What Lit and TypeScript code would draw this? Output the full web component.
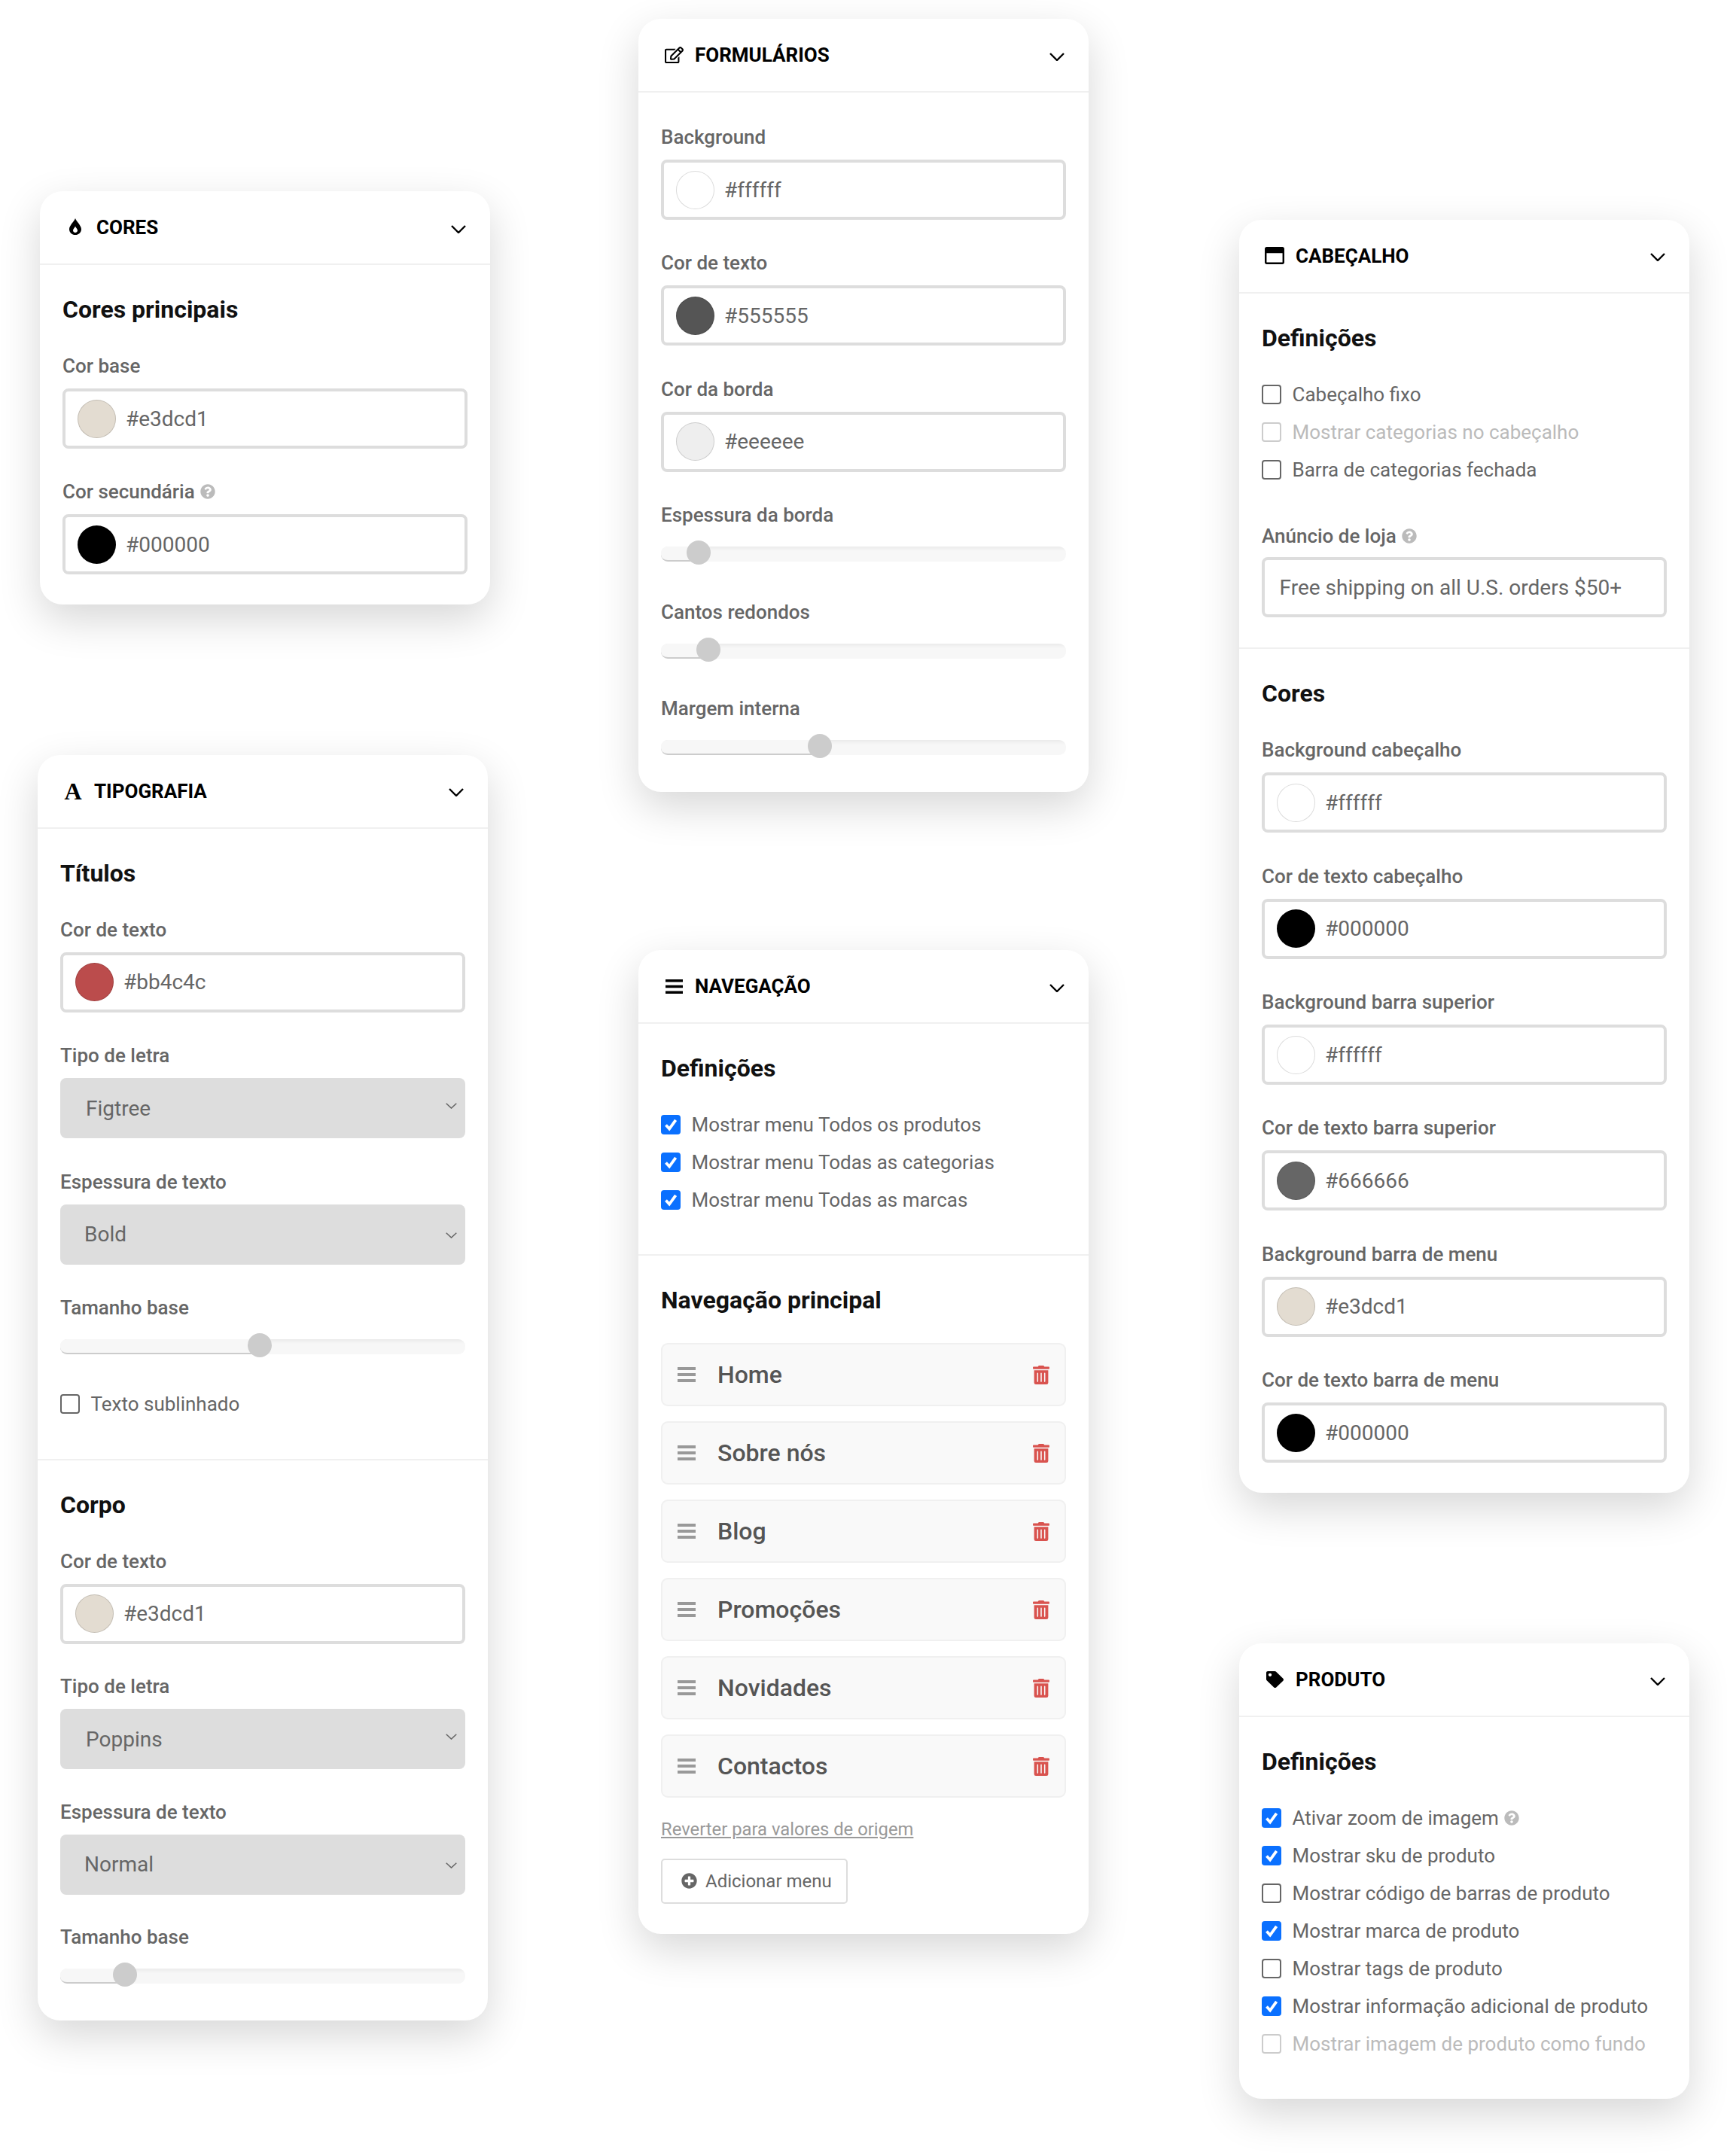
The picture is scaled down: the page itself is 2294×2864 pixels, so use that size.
import { LitElement, html, css } from "lit";
import { customElement } from "lit/decorators.js";

const chevron = html`<svg class="chev" viewBox="0 0 20 11"><path d="M1 1l9 9 9-9" fill="none" stroke="#000" stroke-width="2.4"/></svg>`;
const help = html`<svg class="help" viewBox="0 0 512 512"><path fill="#bbb" d="M504 256c0 136.997-111.043 248-248 248S8 392.997 8 256C8 119.083 119.043 8 256 8s248 111.083 248 248zM262.655 90c-54.497 0-89.255 22.957-116.549 63.758-3.536 5.286-2.353 12.415 2.715 16.258l34.699 26.31c5.205 3.947 12.621 3.008 16.665-2.122 17.864-22.658 30.113-35.797 57.303-35.797 20.429 0 45.698 13.148 45.698 32.958 0 14.976-12.363 22.667-32.534 33.976C247.128 238.528 216 254.941 216 296v4c0 6.627 5.373 12 12 12h56c6.627 0 12-5.373 12-12v-1.333c0-28.462 83.186-29.647 83.186-106.667 0-58.002-60.165-102-116.531-102zM256 338c-25.365 0-46 20.635-46 46 0 25.364 20.635 46 46 46s46-20.636 46-46c0-25.365-20.635-46-46-46z"/></svg>`;
const trash = html`<svg class="trash" viewBox="0 0 448 512"><path fill="#d9534f" d="M32 464a48 48 0 0 0 48 48h288a48 48 0 0 0 48-48V128H32zm272-256a16 16 0 0 1 32 0v224a16 16 0 0 1-32 0zm-96 0a16 16 0 0 1 32 0v224a16 16 0 0 1-32 0zm-96 0a16 16 0 0 1 32 0v224a16 16 0 0 1-32 0zM432 32H312l-9.4-18.7A24 24 0 0 0 281.1 0H166.8a23.72 23.72 0 0 0-21.4 13.3L136 32H16A16 16 0 0 0 0 48v32a16 16 0 0 0 16 16h416a16 16 0 0 0 16-16V48a16 16 0 0 0-16-16z"/></svg>`;
const plus = html`<svg class="plus" viewBox="0 0 512 512"><path fill="#666" d="M256 8C119 8 8 119 8 256s111 248 248 248 248-111 248-248S393 8 256 8zm144 276c0 6.6-5.4 12-12 12h-92v92c0 6.6-5.4 12-12 12h-56c-6.6 0-12-5.4-12-12v-92h-92c-6.6 0-12-5.4-12-12v-56c0-6.6 5.4-12 12-12h92v-92c0-6.6 5.4-12 12-12h56c6.6 0 12 5.4 12 12v92h92c6.6 0 12 5.4 12 12v56z"/></svg>`;
const handle = html`<svg class="handle" viewBox="0 0 24 20"><path fill="#999" d="M0 0h24v4H0zM0 8h24v4H0zM0 16h24v4H0z"/></svg>`;
const tick = html`<svg class="tick" viewBox="0 0 26 26"><path d="M6.5 13.5l4.6 5L19.6 6.8" fill="none" stroke="#fff" stroke-width="3.8"/></svg>`;

const icons = {
  drop: html`<svg class="ic up" style="width:16px;height:22px" viewBox="0 0 16 22"><path fill-rule="evenodd" d="M8 0C6.8 4 0 9.5 0 14.4 0 18.8 3.6 22 8 22s8-3.2 8-7.6C16 9.5 9.2 4 8 0zM8 10.5c.6 1.8 3 3.8 3 5.6 0 1.7-1.3 2.9-3 2.9s-3-1.2-3-2.9c0-1.8 2.4-3.8 3-5.6z"/></svg>`,
  font: html`<span class="ic-a">A</span>`,
  edit: html`<svg class="ic" style="width:25px;height:22px" viewBox="0 0 576 512" preserveAspectRatio="none"><path d="M402.3 344.9l32-32c5-5 13.7-1.5 13.7 5.7V464c0 26.5-21.5 48-48 48H48c-26.5 0-48-21.5-48-48V112c0-26.5 21.5-48 48-48h273.5c7.1 0 10.7 8.6 5.7 13.7l-32 32c-1.5 1.5-3.5 2.3-5.7 2.3H48v352h352V350.5c0-2.1.8-4.1 2.3-5.6zm156.6-201.8L296.3 405.7l-90.4 10c-26.2 2.9-48.5-19.2-45.6-45.6l10-90.4L432.9 17.1c22.9-22.9 59.9-22.9 82.7 0l43.2 43.2c22.9 22.9 22.9 60 .1 82.8zM460.1 174L402 115.9 216.2 301.8l-7.3 65.3 65.3-7.3L460.1 174zm64.8-79.7l-43.2-43.2c-4.1-4.1-10.8-4.1-14.8 0L436 82l58.1 58.1 30.9-30.9c4-4.2 4-10.8-.1-14.9z"/></svg>`,
  bars: html`<svg class="ic" style="width:23px;height:19px" viewBox="0 0 23 19"><path d="M0 0h23v3.6H0zM0 7.7h23v3.6H0zM0 15.4h23V19H0z"/></svg>`,
  win: html`<svg class="ic" style="width:26px;height:23px" viewBox="0 32 512 448" preserveAspectRatio="none"><path d="M464 32H48C21.5 32 0 53.5 0 80v352c0 26.5 21.5 48 48 48h416c26.5 0 48-21.5 48-48V80c0-26.5-21.5-48-48-48zm0 394c0 3.3-2.7 6-6 6H54c-3.3 0-6-2.7-6-6V192h416v234z"/></svg>`,
  tag: html`<svg class="ic" style="width:23px;height:22px" viewBox="0 0 512 512" preserveAspectRatio="none"><path d="M0 252.118V48C0 21.49 21.49 0 48 0h204.118a48 48 0 0 1 33.941 14.059l211.882 211.882c18.745 18.745 18.745 49.137 0 67.882L293.823 497.941c-18.745 18.745-49.137 18.745-67.882 0L14.059 286.059A48 48 0 0 1 0 252.118zM112 64c-26.51 0-48 21.49-48 48s21.49 48 48 48 48-21.49 48-48-21.49-48-48-48z"/></svg>`,
};

@customElement("app-root")
export class AppRoot extends LitElement {
  static styles = css`
    :host { display: block; width: 2294px; height: 2864px; background: #fff; font-family: Roboto, "Liberation Sans", sans-serif; overflow: hidden; }
    * { box-sizing: border-box; }
    .page { display: flex; padding-left: 50px; }
    .col { flex: none; display: flex; flex-direction: column; align-items: flex-start; }
    .c1 { width: 598px; margin-right: 200px; }
    .c2 { width: 598px; margin-right: 200px; }
    .c3 { width: 598px; }
    .card { width: 598px; background: #fff; border-radius: 30px; box-shadow: 0 20px 55px rgba(0,0,0,.16); }
    .m-cores { margin-top: 254px; margin-left: 3px; }
    .m-tipo { margin-top: 199.5px; }
    .m-form { margin-top: 25px; }
    .m-nav { margin-top: 210px; }
    .m-cab { margin-top: 291.5px; }
    .m-prod { margin-top: 200px; }
    .head { height: 98px; border-bottom: 2px solid #f0f0f0; display: flex; align-items: center; padding: 0 32px 0 30px; font-weight: 700; font-size: 26px; color: #000; }
    .icbox { width: 34px; margin-right: 11px; display: flex; justify-content: center; align-items: center; }
    .ic { display: block; flex: none; }
    .ic.up { margin-top: -2px; }
    .ic-a { font: 700 32px/24px "Liberation Serif", serif; }
    .htext { flex: 1; }
    .chev { width: 20px; height: 11px; margin-top: 4px; }
    .sec { padding: 40px 30px 0; border-bottom: 2px solid #f0f0f0; }
    .sec:last-child { border-bottom: 0; }
    .sec.bare { padding-top: 44px; }
    h3 { margin: 0 0 43px; font: 700 32px/38px Roboto, sans-serif; color: #111; height: 36px; }
    h3.tight { margin-bottom: 33px; }
    h3.nav { margin-bottom: 40px; }
    .label { height: 30px; line-height: 30px; font-size: 26px; font-weight: 500; color: #666; margin-bottom: 15px; display: flex; align-items: center; gap: 7px; }
    .help { width: 20px; height: 20px; flex: none; }
    .field { margin-bottom: 42.4px; }
    .field:last-child { margin-bottom: 40px; }
    .corpo .field { margin-bottom: 41.5px; }
    .input { height: 80px; border: 4px solid #ddd; border-radius: 8px; padding: 0 16px; display: flex; align-items: center; gap: 13px; font-size: 28px; color: #666; background: #fff; }
    .input.plain { padding: 0 19.6px; }
    .swatch { width: 51px; height: 51px; border-radius: 50%; border: 1px solid rgba(0,0,0,.14); flex: none; }
    .select { height: 80px; border-radius: 8px; background: #ddd; padding-left: 32px; padding-right: 11.5px; display: flex; align-items: center; justify-content: space-between; font-size: 28px; color: #666; }
    .select.alt { padding-left: 34px; }
    .select svg { width: 15px; height: 8px; margin-top: 2px; }
    .select.alt svg { margin-top: -6px; }
    .sfield { margin-bottom: 51.5px; }
    .sfield:last-child { margin-bottom: 49px; }
    .sfield .label { margin-bottom: 27px; }
    .track { position: relative; height: 20px; border-radius: 9px; background: linear-gradient(#ebebeb 0, #f7f7f7 6px); }
    .fill { height: 20px; background: #f7f7f7; border-bottom: 2.5px solid #ccc; border-radius: 9px 0 0 9px; }
    .thumb { position: absolute; top: -8px; width: 32px; height: 32px; border-radius: 50%; background: #ccc; }
    .checks { margin-bottom: 47px; }
    .m-cab .checks { margin-bottom: 48px; }
    .m-prod .checks { margin-bottom: 48px; }
    .sfield + .checks { margin-top: -10.5px; margin-bottom: 47.5px; }
    .checks + .field { margin-top: 7.6px; }
    .checks + .field .label { margin-bottom: 13.8px; }
    .row { height: 50px; display: flex; align-items: center; gap: 14.5px; font-size: 26px; color: #666; }
    .row.off { color: #bbb; }
    .box { width: 26px; height: 26px; border-radius: 4px; border: 2.4px solid #666; flex: none; background: #fff; }
    .row.off .box { border-color: #ccc; }
    .box.on { background: #0a70ff; border: 0; }
    .tick { display: block; width: 26px; height: 26px; }
    .row .help { margin-left: -7.5px; }
    .items { display: flex; flex-direction: column; gap: 20px; }
    .item { height: 84px; border: 2.5px solid #f0f0f0; border-radius: 9px; background: #f9f9f9; display: flex; align-items: center; padding: 0 20px; font-size: 32px; font-weight: 500; color: #555; }
    .handle { width: 24px; height: 20px; margin-right: 29px; flex: none; }
    .iname { flex: 1; }
    .trash { width: 22px; height: 25px; flex: none; }
    .link { display: block; height: 30px; line-height: 30px; margin-top: 26.5px; font-size: 23.8px; color: #999; text-decoration: underline; }
    .btn { margin: 24px 0 40px; height: 60px; width: 248px; border: 2.5px solid #ddd; border-radius: 5px; display: flex; align-items: center; padding-left: 25px; gap: 11px; font-size: 24px; color: #666; }
    .plus { width: 21px; height: 21px; flex: none; }
  `;

  head(icon: unknown, title: string) {
    return html`<div class="head"><span class="icbox">${icon}</span><span class="htext">${title}</span>${chevron}</div>`;
  }
  color(label: string, value: string, hasHelp = false) {
    return html`<div class="field"><div class="label">${label}${hasHelp ? help : ""}</div>
      <div class="input"><span class="swatch" style="background:${value}"></span>${value}</div></div>`;
  }
  select(label: string, value: string, alt = false) {
    return html`<div class="field"><div class="label">${label}</div>
      <div class="select ${alt ? "alt" : ""}">${value}<svg viewBox="0 0 15 8"><path d="M.7.7l6.8 6.4L14.3.7" fill="none" stroke="#666" stroke-width="1.5"/></svg></div></div>`;
  }
  slider(label: string, pos: number) {
    return html`<div class="sfield"><div class="label">${label}</div>
      <div class="track"><div class="fill" style="width:${pos + 16}px"></div><div class="thumb" style="left:${pos}px"></div></div></div>`;
  }
  check(label: string, state: "on" | "" | "off", hasHelp = false) {
    return html`<div class="row ${state === "off" ? "off" : ""}">
      <span class="box ${state === "on" ? "on" : ""}">${state === "on" ? tick : ""}</span><span>${label}</span>${hasHelp ? help : ""}</div>`;
  }

  render() {
    const menu = ["Home", "Sobre nós", "Blog", "Promoções", "Novidades", "Contactos"];
    return html`<div class="page">
      <div class="col c1">
        <section class="card m-cores">
          ${this.head(icons.drop, "CORES")}
          <div class="sec"><h3>Cores principais</h3>
            ${this.color("Cor base", "#e3dcd1")}
            ${this.color("Cor secundária", "#000000", true)}
          </div>
        </section>
        <section class="card m-tipo">
          ${this.head(icons.font, "TIPOGRAFIA")}
          <div class="sec"><h3>Títulos</h3>
            ${this.color("Cor de texto", "#bb4c4c")}
            ${this.select("Tipo de letra", "Figtree", true)}
            ${this.select("Espessura de texto", "Bold")}
            ${this.slider("Tamanho base", 248.5)}
            <div class="checks">${this.check("Texto sublinhado", "")}</div>
          </div>
          <div class="sec corpo"><h3>Corpo</h3>
            ${this.color("Cor de texto", "#e3dcd1")}
            ${this.select("Tipo de letra", "Poppins", true)}
            ${this.select("Espessura de texto", "Normal")}
            ${this.slider("Tamanho base", 70)}
          </div>
        </section>
      </div>
      <div class="col c2">
        <section class="card m-form">
          ${this.head(icons.edit, "FORMULÁRIOS")}
          <div class="sec bare">
            ${this.color("Background", "#ffffff")}
            ${this.color("Cor de texto", "#555555")}
            ${this.color("Cor da borda", "#eeeeee")}
            ${this.slider("Espessura da borda", 34)}
            ${this.slider("Cantos redondos", 47)}
            ${this.slider("Margem interna", 195)}
          </div>
        </section>
        <section class="card m-nav">
          ${this.head(icons.bars, "NAVEGAÇÃO")}
          <div class="sec"><h3 class="tight">Definições</h3>
            <div class="checks">
              ${this.check("Mostrar menu Todos os produtos", "on")}
              ${this.check("Mostrar menu Todas as categorias", "on")}
              ${this.check("Mostrar menu Todas as marcas", "on")}
            </div>
          </div>
          <div class="sec"><h3 class="nav">Navegação principal</h3>
            <div class="items">
              ${menu.map((m) => html`<div class="item">${handle}<span class="iname">${m}</span>${trash}</div>`)}
            </div>
            <a class="link">Reverter para valores de origem</a>
            <div class="btn">${plus}<span>Adicionar menu</span></div>
          </div>
        </section>
      </div>
      <div class="col c3">
        <section class="card m-cab">
          ${this.head(icons.win, "CABEÇALHO")}
          <div class="sec"><h3 class="tight">Definições</h3>
            <div class="checks">
              ${this.check("Cabeçalho fixo", "")}
              ${this.check("Mostrar categorias no cabeçalho", "off")}
              ${this.check("Barra de categorias fechada", "")}
            </div>
            <div class="field"><div class="label">Anúncio de loja${help}</div>
              <div class="input plain">Free shipping on all U.S. orders $50+</div></div>
          </div>
          <div class="sec"><h3>Cores</h3>
            ${this.color("Background cabeçalho", "#ffffff")}
            ${this.color("Cor de texto cabeçalho", "#000000")}
            ${this.color("Background barra superior", "#ffffff")}
            ${this.color("Cor de texto barra superior", "#666666")}
            ${this.color("Background barra de menu", "#e3dcd1")}
            ${this.color("Cor de texto barra de menu", "#000000")}
          </div>
        </section>
        <section class="card m-prod">
          ${this.head(icons.tag, "PRODUTO")}
          <div class="sec"><h3 class="tight">Definições</h3>
            <div class="checks">
              ${this.check("Ativar zoom de imagem", "on", true)}
              ${this.check("Mostrar sku de produto", "on")}
              ${this.check("Mostrar código de barras de produto", "")}
              ${this.check("Mostrar marca de produto", "on")}
              ${this.check("Mostrar tags de produto", "")}
              ${this.check("Mostrar informação adicional de produto", "on")}
              ${this.check("Mostrar imagem de produto como fundo", "off")}
            </div>
          </div>
        </section>
      </div>
    </div>`;
  }
}
